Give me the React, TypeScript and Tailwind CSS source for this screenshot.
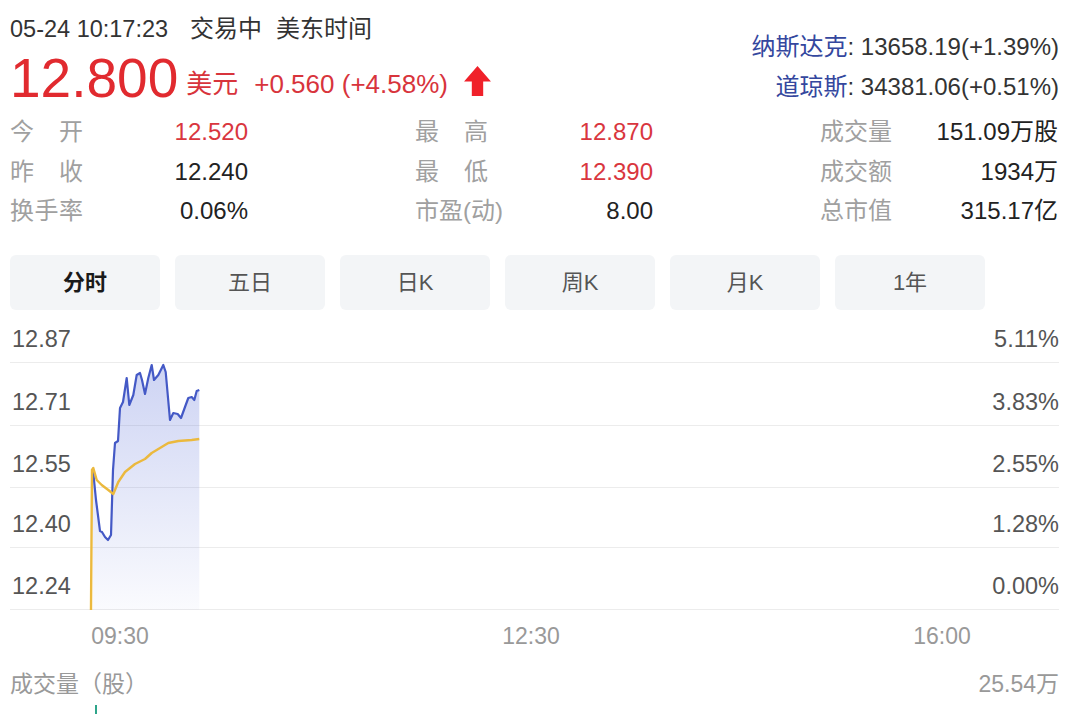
const red = "text-[#e12a2f]";

type Stat = { label: string[]; value: string; hot?: boolean };

const columns: Stat[][] = [
  [
    { label: ["今", "开"], value: "12.520", hot: true },
    { label: ["昨", "收"], value: "12.240" },
    { label: ["换", "手", "率"], value: "0.06%" },
  ],
  [
    { label: ["最", "高"], value: "12.870", hot: true },
    { label: ["最", "低"], value: "12.390", hot: true },
    { label: ["市盈(动)"], value: "8.00" },
  ],
  [
    { label: ["成交量"], value: "151.09万股" },
    { label: ["成交额"], value: "1934万" },
    { label: ["总市值"], value: "315.17亿" },
  ],
];

const tabs = ["分时", "五日", "日K", "周K", "月K", "1年"];

const rows = [
  { price: "12.87", pct: "5.11%", h: "h-[53px]" },
  { price: "12.71", pct: "3.83%", h: "h-[63px]" },
  { price: "12.55", pct: "2.55%", h: "h-[62px]" },
  { price: "12.40", pct: "1.28%", h: "h-[60px]" },
  { price: "12.24", pct: "0.00%", h: "h-[62px]" },
];

const blueLine =
  "93,470 96,500 100,531 102,532 105,537 108,540 111,535 113,470 115,443 118,441 120,408 123,402 126.7,378 129.3,405 133.3,395 136.7,375 140,373 142,380 145,394 148.3,378 151.7,365 154,380 158.3,375 163.3,365 165.7,372 170,420 173.3,413 177.7,414 181,418 185,407 188.3,398 191.7,397 194.3,400 196.7,391 199.3,390";

const yellowLine =
  "91,610 92,470 93.3,468 96.7,480 101.7,485 108.3,490 113.3,494 118.3,482 125,472 135,464 145,459 151.7,453 160,448 168.3,443 178.3,441 191.7,440 199.3,439";

const StatCell = ({ s }: { s: Stat }) => (
  <div className="flex w-[238px] justify-between leading-[39.5px]">
    <span className="flex w-[73px] justify-between text-[#a0a0a0]">
      {s.label.map((c, i) => (
        <span key={i} className="whitespace-nowrap">
          {c}
        </span>
      ))}
    </span>
    <span className={s.hot ? "text-[#d9363e]" : "text-[#222]"}>{s.value}</span>
  </div>
);

export default function App() {
  return (
    <div className="h-[714px] w-[1067px] overflow-hidden bg-white pl-[10px] pr-[8px] font-['Liberation_Sans','Noto_Sans_CJK_SC',sans-serif]">
      {/* header */}
      <div className="flex justify-between">
        <div className="pt-[16px]">
          <div className="flex items-baseline text-[23.5px] leading-[26px] text-[#333]">
            <span>05-24 10:17:23</span>
            <span className="ml-[22px] text-[24px]">交易中</span>
            <span className="ml-[14px] text-[24px]">美东时间</span>
          </div>
          <div className="mt-[9px] flex items-end">
            <span className={`text-[55px] leading-none ${red}`}>12.800</span>
            <span className="mb-[8px] ml-[8px] text-[26px] leading-[28px] text-[#d8343c]">美元</span>
            <span className="mb-[8px] ml-[16px] text-[26px] leading-[28px] text-[#d8343c]">+0.560 (+4.58%)</span>
            <svg className="mb-[10px] ml-[16px]" width="27" height="30" viewBox="0 0 26 29">
              <polygon points="13,0 26,15 18.5,15 18.5,29 7.5,29 7.5,15 0,15" fill="#f0212a" />
            </svg>
          </div>
        </div>
        <div className="flex flex-col items-end pt-[27px] text-[24px] leading-[40px]">
          <div>
            <span className="text-[#34479e]">纳斯达克</span>
            <span className="text-[#333]">: 13658.19(+1.39%)</span>
          </div>
          <div>
            <span className="text-[#34479e]">道琼斯</span>
            <span className="text-[#333]">: 34381.06(+0.51%)</span>
          </div>
        </div>
      </div>

      {/* stats */}
      <div className="mt-[5px] flex text-[24px]">
        {columns.map((col, ci) => (
          <div key={ci} className={ci < 2 ? "w-[405px]" : "w-[238px]"}>
            {col.map((s, i) => (
              <StatCell key={i} s={s} />
            ))}
          </div>
        ))}
      </div>

      {/* tabs */}
      <div className="mt-[24px] flex gap-[15px]">
        {tabs.map((t, i) => (
          <div
            key={t}
            className={`flex h-[55px] w-[150px] items-center justify-center rounded-[6px] bg-[#f3f5f7] text-[22px] ${
              i === 0 ? "font-bold text-[#1a1a1a]" : "text-[#555]"
            }`}
          >
            {t}
          </div>
        ))}
      </div>

      {/* chart */}
      <div className="relative">
        {rows.map((r) => (
          <div
            key={r.price}
            className={`flex items-end justify-between border-b border-[#ececec] pb-[9px] pl-[2px] text-[23.5px] leading-[28px] text-[#555] ${r.h}`}
          >
            <span>{r.price}</span>
            <span>{r.pct}</span>
          </div>
        ))}
        <svg
          className="pointer-events-none absolute left-0 top-0"
          width="1049"
          height="300"
          viewBox="10 310 1049 300"
        >
          <defs>
            <linearGradient id="fill" x1="0" y1="0" x2="0" y2="1">
              <stop offset="0" stopColor="#5a6fd8" stopOpacity="0.3" />
              <stop offset="1" stopColor="#5a6fd8" stopOpacity="0.03" />
            </linearGradient>
          </defs>
          <polygon points={`${blueLine} 199.3,610 93,610`} fill="url(#fill)" />
          <polyline points={blueLine} fill="none" stroke="#4459c6" strokeWidth="2.2" strokeLinejoin="round" />
          <polyline points={yellowLine} fill="none" stroke="#ebb93e" strokeWidth="2.4" strokeLinejoin="round" />
        </svg>
      </div>

      {/* time axis */}
      <div className="mt-[13px] grid grid-cols-[60px_60px_60px] gap-x-[351px] pl-[80px] text-center text-[23px] leading-[26px] text-[#999]">
        <span>09:30</span>
        <span>12:30</span>
        <span>16:00</span>
      </div>

      {/* volume */}
      <div className="mt-[22px] flex justify-between text-[23px] leading-[26px] text-[#999]">
        <span>成交量（股）</span>
        <span>25.54万</span>
      </div>
      <div className="ml-[85px] mt-[8px] h-[10px] w-[2px] bg-[#2ea58a]" />
    </div>
  );
}
